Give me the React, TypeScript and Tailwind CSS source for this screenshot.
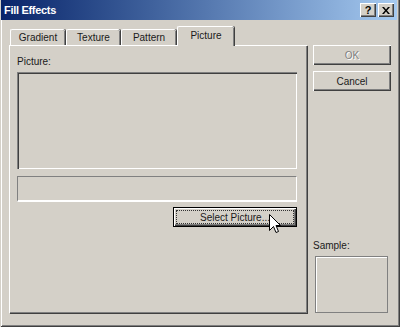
import React from "react";

const font = { fontFamily: '"Liberation Sans", Arial, sans-serif' };

function Tab({ label, selected }: { label: string; selected?: boolean }) {
  if (selected) {
    return (
      <div className="relative z-10 -mb-[1px] flex h-[20px] w-[57px] items-center justify-center rounded-t-[2px] border-l border-t border-white bg-[#d4d0c8] pb-[2px] text-[10px] text-[#1a1a1a] shadow-[inset_-1px_0_#808080,1px_0_#404040]">
        {label}
      </div>
    );
  }
  return (
    <div className="flex h-[16px] items-center justify-center rounded-t-[2px] border-l border-t border-white bg-[#d4d0c8] text-[10px] text-[#1a1a1a] shadow-[inset_-1px_0_#808080,1px_0_#404040]">
      {label}
    </div>
  );
}

export default function App() {
  return (
    <div
      style={font}
      className="relative flex h-[327px] w-[400px] flex-col overflow-hidden bg-[#d4d0c8] shadow-[inset_1px_0_#d4d0c8,inset_-1px_-1px_#404040,inset_2px_0_#ffffff,inset_-2px_-2px_#808080]"
    >
      {/* Title bar */}
      <div className="mx-[1px] flex h-[20px] w-[396px] items-center justify-between bg-gradient-to-r from-[#0a246a] to-[#a6caf0] pl-[3px] pr-[3px]">
        <span className="text-[11px] font-bold tracking-[-0.3px] text-white">Fill Effects</span>
        <div className="flex gap-[2px]">
          <div className="flex h-[14px] w-[16px] items-center justify-center bg-[#d4d0c8] text-[11px] font-bold leading-none text-black shadow-[inset_1px_1px_#ffffff,inset_-1px_-1px_#404040,inset_-2px_-2px_#808080]">
            ?
          </div>
          <div className="flex h-[14px] w-[16px] items-center justify-center bg-[#d4d0c8] shadow-[inset_1px_1px_#ffffff,inset_-1px_-1px_#404040,inset_-2px_-2px_#808080]">
            <svg width="8" height="7" viewBox="0 0 8 7">
              <path d="M0 0h2l2 2.5L6 0h2L5 3.5 8 7H6L4 4.5 2 7H0l3-3.5z" fill="#000" />
            </svg>
          </div>
        </div>
      </div>

      {/* Body */}
      <div className="flex flex-1 pl-[9px] pt-[7px]">
        {/* Left column */}
        <div className="flex w-[298px] flex-col">
          <div className="flex h-[18px] items-end gap-[1px] pl-[1px]">
            <div className="w-[55px]"><Tab label="Gradient" /></div>
            <div className="w-[54px]"><Tab label="Texture" /></div>
            <div className="w-[55px]"><Tab label="Pattern" /></div>
            <Tab label="Picture" selected />
          </div>
          <div className="flex h-[268px] flex-col border-l border-t border-white pl-[7px] pt-[9px] shadow-[inset_-1px_-1px_#808080,1px_1px_#404040]">
            <div className="h-[17px] text-[10px] leading-[13px] text-[#1a1a1a]">Picture:</div>
            <div className="h-[97px] w-[280px] bg-[#d4d0c8] shadow-[inset_1px_1px_#808080,inset_2px_2px_#404040,inset_-1px_-1px_#ffffff]" />
            <div className="mt-[7px] h-[26px] w-[280px] border-l border-t border-[#808080] border-b-2 border-r border-b-[#ffffff] border-r-[#ffffff]" />
            <div className="mt-[5px] flex w-[280px] justify-end">
              <div className="flex h-[20px] w-[124px] items-center justify-center bg-[#d4d0c8] p-[3px] shadow-[inset_1px_1px_#000000,inset_-1px_-1px_#000000,inset_2px_2px_#ffffff,inset_-2px_-2px_#404040,inset_-3px_-3px_#808080]">
                <div className="flex h-full w-full items-center justify-center border border-dotted border-[#333333] text-[10px] text-[#1a1a1a]">
                  Select Picture...
                </div>
              </div>
            </div>
          </div>
        </div>

        {/* Right column */}
        <div className="ml-[6px] flex w-[78px] flex-col pt-[18px]">
          <div className="flex h-[20px] w-[78px] items-center justify-center text-[10px] text-[#808080] shadow-[inset_1px_1px_#ffffff,inset_-1px_-1px_#404040,inset_-2px_-2px_#808080]">
            <span className="[text-shadow:1px_1px_#ffffff]">OK</span>
          </div>
          <div className="mt-[6px] flex h-[20px] w-[78px] items-center justify-center text-[10px] text-[#1a1a1a] shadow-[inset_1px_1px_#ffffff,inset_-1px_-1px_#404040,inset_-2px_-2px_#808080]">
            Cancel
          </div>
          <div className="mt-[148px] h-[14px] text-[10px] leading-[13px] text-[#1a1a1a]">Sample:</div>
          <div className="ml-[2px] mt-[3px] h-[57px] w-[73px] border border-[#808080] shadow-[inset_1px_1px_#ffffff]" />
        </div>
      </div>

      {/* Cursor */}
      <svg className="absolute left-[269px] top-[214px]" width="12" height="20" viewBox="0 0 12 20">
        <path d="M0.5 0.5V16.5L4.5 12.5L7 18.5L9.5 17.5L7 11.5H11.5Z" fill="#ffffff" stroke="#000000" strokeWidth="1" />
      </svg>
    </div>
  );
}
